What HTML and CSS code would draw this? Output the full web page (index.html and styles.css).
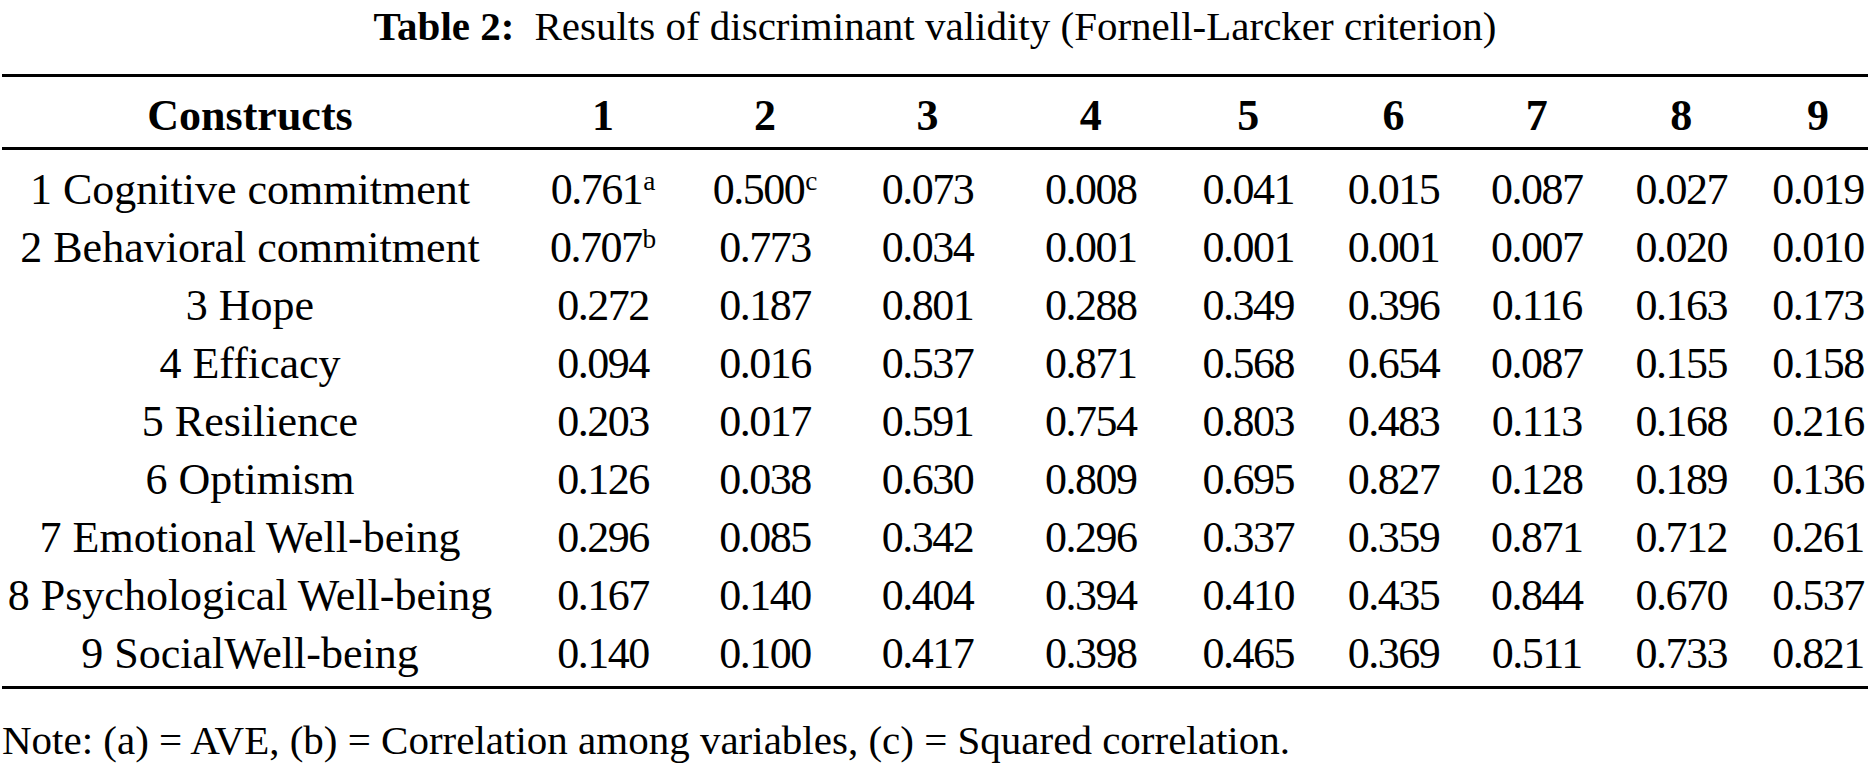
FILE: index.html
```html
<!DOCTYPE html>
<html lang="en">
<head>
<meta charset="utf-8">
<title>Table 2: Results of discriminant validity</title>
<link rel="stylesheet" href="styles.css">
</head>
<body>
<div class="page">
  <p class="caption"><b class="caption-label">Table 2:</b><span class="caption-gap"></span>Results of discriminant validity (Fornell-Larcker criterion)</p>
  <table class="fl-table">
    <colgroup>
      <col class="w0"><col class="w1"><col class="w2"><col class="w3"><col class="w4"><col class="w5"><col class="w6"><col class="w7"><col class="w8"><col class="w9">
    </colgroup>
    <thead>
      <tr>
        <th class="name">Constructs</th><th>1</th><th>2</th><th>3</th><th>4</th><th>5</th><th>6</th><th>7</th><th>8</th><th class="last">9</th>
      </tr>
    </thead>
    <tbody>
      <tr class="first">
        <td class="name">1 Cognitive commitment</td><td>0.761<span class="sup">a</span></td><td>0.500<span class="sup">c</span></td><td>0.073</td><td>0.008</td><td>0.041</td><td>0.015</td><td>0.087</td><td>0.027</td><td class="last">0.019</td>
      </tr>
      <tr>
        <td class="name">2 Behavioral commitment</td><td>0.707<span class="sup">b</span></td><td>0.773</td><td>0.034</td><td>0.001</td><td>0.001</td><td>0.001</td><td>0.007</td><td>0.020</td><td class="last">0.010</td>
      </tr>
      <tr>
        <td class="name">3 Hope</td><td>0.272</td><td>0.187</td><td>0.801</td><td>0.288</td><td>0.349</td><td>0.396</td><td>0.116</td><td>0.163</td><td class="last">0.173</td>
      </tr>
      <tr>
        <td class="name">4 Efficacy</td><td>0.094</td><td>0.016</td><td>0.537</td><td>0.871</td><td>0.568</td><td>0.654</td><td>0.087</td><td>0.155</td><td class="last">0.158</td>
      </tr>
      <tr>
        <td class="name">5 Resilience</td><td>0.203</td><td>0.017</td><td>0.591</td><td>0.754</td><td>0.803</td><td>0.483</td><td>0.113</td><td>0.168</td><td class="last">0.216</td>
      </tr>
      <tr>
        <td class="name">6 Optimism</td><td>0.126</td><td>0.038</td><td>0.630</td><td>0.809</td><td>0.695</td><td>0.827</td><td>0.128</td><td>0.189</td><td class="last">0.136</td>
      </tr>
      <tr>
        <td class="name">7 Emotional Well-being</td><td>0.296</td><td>0.085</td><td>0.342</td><td>0.296</td><td>0.337</td><td>0.359</td><td>0.871</td><td>0.712</td><td class="last">0.261</td>
      </tr>
      <tr>
        <td class="name">8 Psychological Well-being</td><td>0.167</td><td>0.140</td><td>0.404</td><td>0.394</td><td>0.410</td><td>0.435</td><td>0.844</td><td>0.670</td><td class="last">0.537</td>
      </tr>
      <tr class="final">
        <td class="name">9 SocialWell-being</td><td>0.140</td><td>0.100</td><td>0.417</td><td>0.398</td><td>0.465</td><td>0.369</td><td>0.511</td><td>0.733</td><td class="last">0.821</td>
      </tr>
    </tbody>
  </table>
  <p class="note">Note: (a) = AVE, (b) = Correlation among variables, (c) = Squared correlation.</p>
</div>
</body>
</html>
```

FILE: styles.css
```css
html, body {
  margin: 0;
  padding: 0;
  background: #ffffff;
}

body {
  font-family: "Liberation Serif", "Times New Roman", serif;
  color: #000000;
}

.page {
  width: 1866px;
  padding-left: 2px;
}

.caption {
  margin: 0 0 22px 0;
  font-size: 41px;
  line-height: 52px;
  text-align: center;
  white-space: nowrap;
}

.caption-label {
  font-weight: bold;
}

.caption-gap {
  display: inline-block;
  width: 20px;
}

.fl-table {
  width: 1866px;
  table-layout: fixed;
  border-collapse: separate;
  border-spacing: 0;
  font-size: 44px;
}

.w0 { width: 520px; }
.w1 { width: 162px; }
.w2 { width: 162px; }
.w3 { width: 163px; }
.w4 { width: 163.5px; }
.w5 { width: 151.5px; }
.w6 { width: 139px; }
.w7 { width: 147.5px; }
.w8 { width: 141.5px; }
.w9 { width: 116px; }

.fl-table th,
.fl-table td {
  padding: 0;
  text-align: center;
  white-space: nowrap;
  vertical-align: top;
}

.fl-table th {
  font-weight: bold;
  line-height: 62px;
  padding-top: 8px;
  border-top: 3px solid #000000;
  border-bottom: 3px solid #000000;
}

.fl-table td {
  font-weight: normal;
  line-height: 58px;
  letter-spacing: -1.5px;
}

.fl-table td.name {
  letter-spacing: 0;
}

.fl-table .name {
  padding-right: 24px;
}

.fl-table .last {
  padding-left: 16px;
}

.fl-table tr.first td {
  padding-top: 11px;
}

.fl-table tr.final td {
  padding-bottom: 3px;
  border-bottom: 3px solid #000000;
}

.sup {
  font-size: 0.62em;
  line-height: 0;
  vertical-align: 0.5em;
  letter-spacing: 0;
  margin-left: 1px;
}

.note {
  margin: 25px 0 0 0;
  font-size: 41px;
  line-height: 52px;
  white-space: nowrap;
}
```
